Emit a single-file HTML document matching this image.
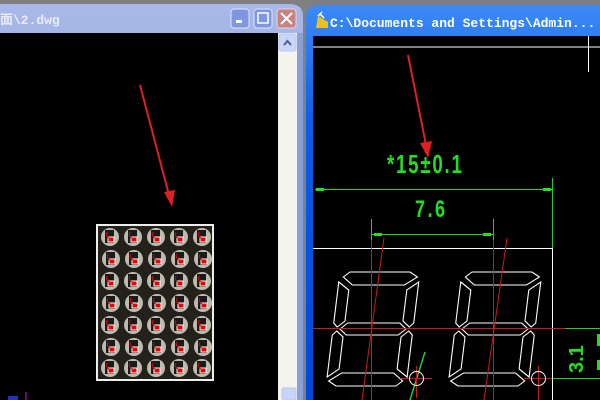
<!DOCTYPE html>
<html><head><meta charset="utf-8"><style>
html,body{margin:0;padding:0;width:600px;height:400px;overflow:hidden;background:#7f7f7f;}
</style></head><body>
<svg width="600" height="400" xmlns="http://www.w3.org/2000/svg" style="position:absolute;left:0;top:0">
<defs>
<linearGradient id="lt" x1="0" y1="0" x2="0" y2="1"><stop offset="0" stop-color="#a8b8e8"/><stop offset="0.5" stop-color="#95a8e0"/><stop offset="1" stop-color="#8a9ed8"/></linearGradient>
<linearGradient id="rt" x1="0" y1="0" x2="0" y2="1"><stop offset="0" stop-color="#3d8af7"/><stop offset="0.3" stop-color="#0a5ee8"/><stop offset="1" stop-color="#0048d8"/></linearGradient>
<g id="dg" fill="none" stroke="#fff" stroke-width="1.1" transform="skewX(-7)">
<polygon points="10,0 70,0 78,5 66,13 14,13 4,5"/>
<polygon points="14,51 66,51 73,57 66,63 14,63 7,57"/>
<polygon points="14,101 66,101 76,109 70,114 10,114 2,109"/>
<polygon points="0,10 11,18 11,49 4,55 0,51"/>
<polygon points="80,10 69,18 69,49 76,55 80,51"/>
<polygon points="0,63 4,59 11,65 11,97 0,105"/>
<polygon points="80,63 76,59 69,65 69,97 80,105"/>
</g>
<g id="c"><circle cx="10" cy="10" r="9" fill="#bdbab0"/><rect x="5" y="3" width="9" height="13" fill="#1a1a1a"/><rect x="8" y="10" width="6" height="5" fill="#e00" stroke="#fff" stroke-width="1"/><path d="M7,5 q-2,4 2,6" stroke="#d00" fill="none"/></g>
<g id="row"><use href="#c"/><use href="#c" x="23"/><use href="#c" x="46"/><use href="#c" x="69"/><use href="#c" x="92"/></g>
</defs>
<path d="M0,4 L288,4 Q302,4 303,14 L303,400 L0,400Z" fill="url(#lt)"/>
<text x="0" y="24" font-family="Liberation Mono,'Noto Sans CJK SC',monospace" font-size="13" fill="#e8ecfa" font-weight="bold">面\2.dwg</text>
<rect x="231" y="9" width="18" height="19" rx="3" fill="#7f96e0" stroke="#dfe6fb"/>
<rect x="236" y="20" width="6" height="3" fill="#fff"/>
<rect x="254" y="9" width="18" height="19" rx="3" fill="#7f96e0" stroke="#dfe6fb"/>
<rect x="258" y="13" width="10" height="10" fill="none" stroke="#fff" stroke-width="1.5"/>
<rect x="277" y="9" width="19" height="19" rx="3" fill="#c8827f" stroke="#e8d4e0"/>
<path d="M281,13 L292,24 M292,13 L281,24" stroke="#fff" stroke-width="2"/>
<rect x="0" y="33" width="278" height="367" fill="#000"/>
<rect x="278" y="33" width="19" height="367" fill="#f4f3ee"/>
<rect x="279" y="34" width="17" height="17" rx="2" fill="#c7d5f8" stroke="#b4c6f0"/>
<path d="M284,45 L287.5,41 L291,45" stroke="#4d6185" stroke-width="2" fill="none"/>
<rect x="282" y="388" width="14" height="12" rx="2" fill="#c7d5f8" stroke="#b4c6f0"/>
<rect x="297" y="33" width="6" height="367" fill="#8a9ed8"/>
<rect x="303" y="0" width="3" height="400" fill="#808080"/>
<line x1="26" y1="392" x2="26" y2="400" stroke="#c020c0"/>
<rect x="8" y="396" width="10" height="4" fill="#2030c0"/>
<rect x="96" y="224" width="118" height="157" fill="#eee"/>
<rect x="98" y="226" width="114" height="153" fill="#23221a"/>
<use href="#row" x="100" y="227"/>
<use href="#row" x="101" y="249"/>
<use href="#row" x="100" y="271"/>
<use href="#row" x="101" y="293"/>
<use href="#row" x="100" y="315"/>
<use href="#row" x="101" y="337"/>
<use href="#row" x="100" y="358"/>
<path d="M306,400 L306,16 Q307,5 318,5 L600,5 L600,400Z" fill="url(#rt)"/>
<path d="M316,28 L328,28 L328,22 L318,16Z" fill="#f0c020"/>
<path d="M318,16 L322,12 M320,14 L324,18" stroke="#fff" stroke-width="1.5"/>
<text x="330" y="27" font-family="Liberation Mono,monospace" font-size="13" font-weight="bold" fill="#fff">C:\Documents and Settings\Admin...</text>
<rect x="313" y="36" width="287" height="364" fill="#000"/>
<line x1="313" y1="47" x2="600" y2="47" stroke="#fff"/>
<line x1="588.5" y1="36" x2="588.5" y2="72" stroke="#fff"/>
<line x1="140" y1="85" x2="169" y2="195" stroke="#e02020" stroke-width="2"/>
<polygon points="164,192 175,190 172,207" fill="#e02020"/>
<line x1="408" y1="55" x2="426" y2="145" stroke="#e02020" stroke-width="2"/>
<polygon points="420,143 432,141 428,158" fill="#e02020"/>
<g font-family="Liberation Sans Narrow,Liberation Sans,sans-serif" font-weight="bold" fill="#20e020">
<text transform="translate(387,173) scale(0.72,1)" font-size="26" textLength="104" lengthAdjust="spacing">*15±0.1</text>
<text transform="translate(415,217) scale(0.75,1)" font-size="24" textLength="40" lengthAdjust="spacing">7.6</text>
<text transform="translate(583,373) rotate(-90)" font-size="20">3.1</text>
</g>
<g stroke="#20d020" stroke-width="1">
<line x1="315" y1="189.5" x2="552" y2="189.5"/>
<line x1="552.5" y1="178" x2="552.5" y2="248"/>
<line x1="371" y1="234.5" x2="493" y2="234.5"/>
<line x1="371.5" y1="219" x2="371.5" y2="248"/>
<line x1="493.5" y1="219" x2="493.5" y2="248"/>
<line x1="565" y1="328.5" x2="600" y2="328.5"/>
<line x1="546" y1="378.5" x2="600" y2="378.5"/>
<line x1="425" y1="352" x2="410" y2="400" stroke-width="1.5"/>
</g>
<g fill="#20e020">
<rect x="316" y="188" width="8" height="3"/><rect x="543" y="188" width="8" height="3"/>
<rect x="374" y="233" width="8" height="3"/><rect x="483" y="233" width="8" height="3"/>
<rect x="597" y="334" width="3" height="12"/><rect x="597" y="360" width="3" height="10"/>
</g>
<line x1="313" y1="248.5" x2="552" y2="248.5" stroke="#fff"/>
<line x1="552.5" y1="248" x2="552.5" y2="400" stroke="#fff"/>
<use href="#dg" x="340" y="272"/>
<use href="#dg" x="462" y="272"/>
<g stroke="#d01818" stroke-width="1">
<line x1="313" y1="328.5" x2="565" y2="328.5"/>
<line x1="371.5" y1="240" x2="371.5" y2="400"/>
<line x1="493.5" y1="240" x2="493.5" y2="400"/>
<line x1="384" y1="238" x2="362" y2="400"/>
<line x1="507" y1="238" x2="484" y2="400"/>
<line x1="400" y1="378.5" x2="432" y2="378.5"/>
<line x1="416.5" y1="366" x2="416.5" y2="398"/>
<line x1="524" y1="378.5" x2="552" y2="378.5"/>
<line x1="538.5" y1="366" x2="538.5" y2="400"/>
</g>
<circle cx="416.5" cy="378.5" r="7" fill="none" stroke="#fff"/>
<circle cx="538.5" cy="378.5" r="7" fill="none" stroke="#fff"/>
</svg>
</body></html>
